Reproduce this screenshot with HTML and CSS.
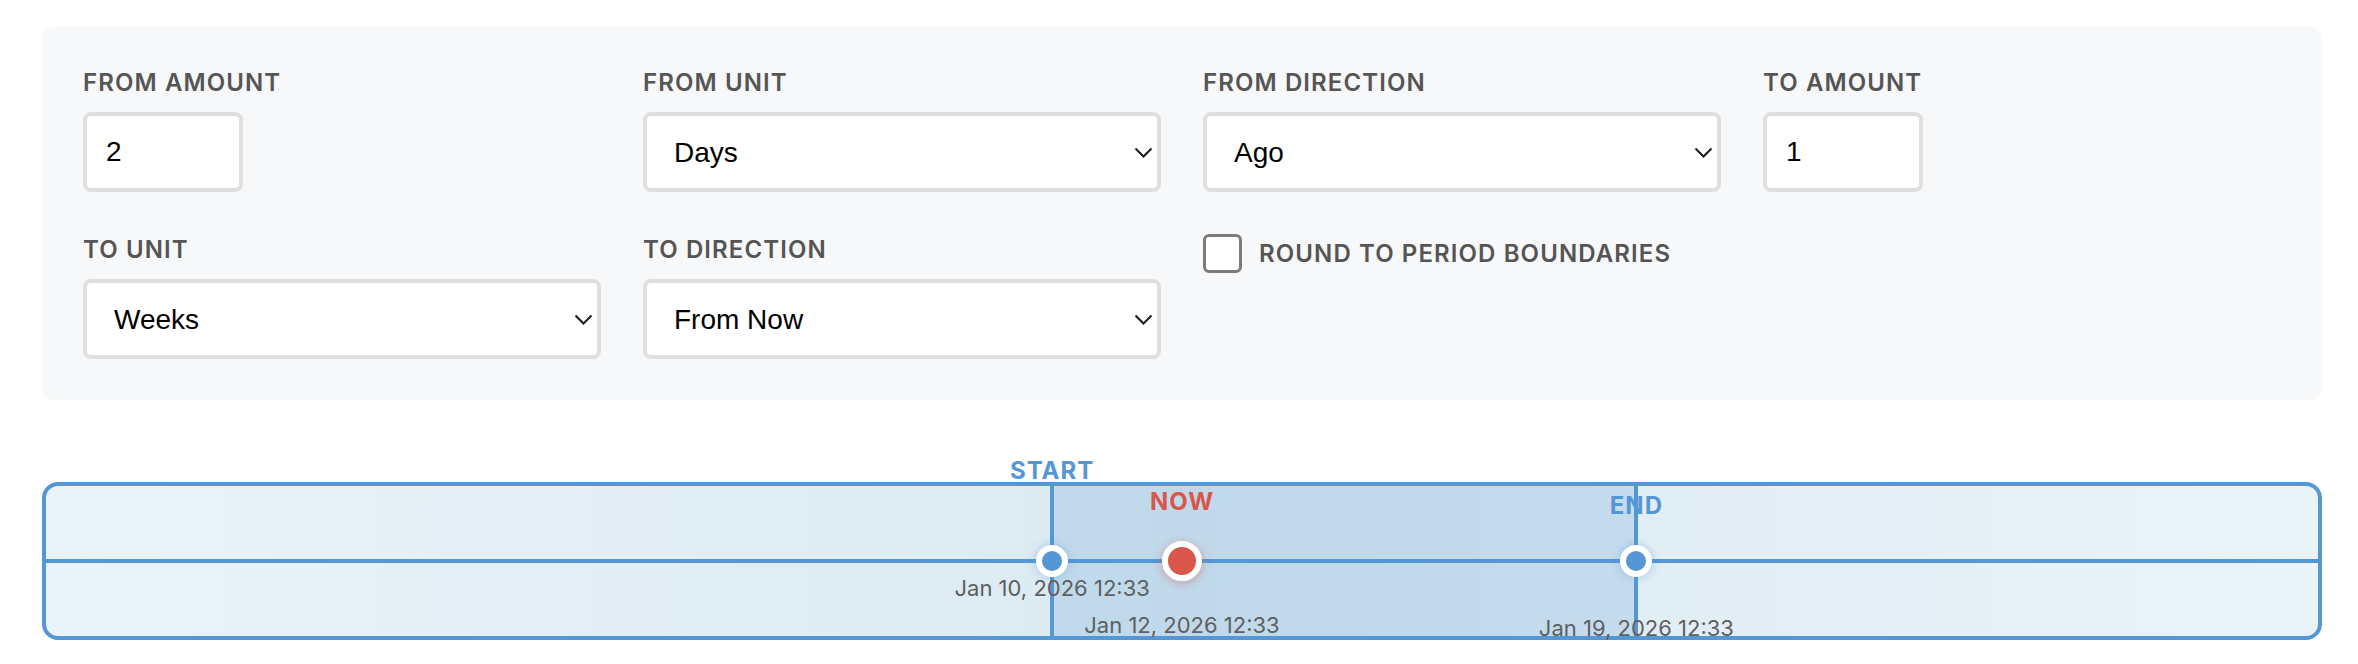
FILE: index.html
```html
<!DOCTYPE html>
<html>
<head>
    <title>Relative Range Picker</title>
    <link rel="stylesheet" href="styles.css">
</head>
<body>
    <div class="page">
        <div class="panel">
            <div class="field">
                <label for="fromAmount">From Amount</label>
                <input type="number" id="fromAmount" class="amount" value="2">
            </div>
            <div class="field">
                <label for="fromUnit">From Unit</label>
                <div class="select-wrap">
                    <select id="fromUnit">
                        <option>Days</option>
                        <option>Weeks</option>
                        <option>Months</option>
                    </select>
                    <svg class="chevron" width="19" height="11" viewBox="0 0 19 11"><polyline points="1.5,1.5 9.5,9.5 17.5,1.5"/></svg>
                </div>
            </div>
            <div class="field">
                <label for="fromDirection">From Direction</label>
                <div class="select-wrap">
                    <select id="fromDirection">
                        <option>Ago</option>
                        <option>From Now</option>
                    </select>
                    <svg class="chevron" width="19" height="11" viewBox="0 0 19 11"><polyline points="1.5,1.5 9.5,9.5 17.5,1.5"/></svg>
                </div>
            </div>
            <div class="field">
                <label for="toAmount">To Amount</label>
                <input type="number" id="toAmount" class="amount" value="1">
            </div>

            <div class="field">
                <label for="toUnit">To Unit</label>
                <div class="select-wrap">
                    <select id="toUnit">
                        <option>Weeks</option>
                        <option>Days</option>
                        <option>Months</option>
                    </select>
                    <svg class="chevron" width="19" height="11" viewBox="0 0 19 11"><polyline points="1.5,1.5 9.5,9.5 17.5,1.5"/></svg>
                </div>
            </div>
            <div class="field">
                <label for="toDirection">To Direction</label>
                <div class="select-wrap">
                    <select id="toDirection">
                        <option>From Now</option>
                        <option>Ago</option>
                    </select>
                    <svg class="chevron" width="19" height="11" viewBox="0 0 19 11"><polyline points="1.5,1.5 9.5,9.5 17.5,1.5"/></svg>
                </div>
            </div>
            <div class="field">
                <label class="check">
                    <input type="checkbox" id="round">
                    <span>Round to period boundaries</span>
                </label>
            </div>
        </div>

        <div class="timeline">
            <div class="range" style="left: 44.286%; width: 25.714%;"></div>
            <div class="axis"></div>

            <div class="marker start" style="left: 44.286%;">
                <div class="marker-line"></div>
                <div class="marker-dot"></div>
                <div class="marker-tag">Start</div>
                <div class="marker-date">Jan 10, 2026 12:33</div>
            </div>
            <div class="marker now" style="left: 50%;">
                <div class="marker-dot"></div>
                <div class="marker-tag">Now</div>
                <div class="marker-date">Jan 12, 2026 12:33</div>
            </div>
            <div class="marker end" style="left: 70%;">
                <div class="marker-line"></div>
                <div class="marker-dot"></div>
                <div class="marker-tag">End</div>
                <div class="marker-date">Jan 19, 2026 12:33</div>
            </div>
        </div>
    </div>
</body>
</html>
```

FILE: styles.css
```css
body { margin: 0; background: #fff; font-family: Inter, "Noto Sans", sans-serif; }
.page { padding: 27px 36px 20px 42px; }

/* form panel */
.panel { display: grid; grid-template-columns: repeat(4, 1fr); gap: 42px; padding: 40px 41px 41px; background: #f7f8fa; border-radius: 12px; }
.field { display: flex; flex-direction: column; align-items: flex-start; }
.field label { display: block; padding-top: 2px; margin-bottom: 15px; font-size: 24px; line-height: 28px; font-weight: 600; letter-spacing: 1.1px; text-transform: uppercase; color: #555; }
input.amount, select { box-sizing: border-box; height: 80px; border: 4px solid #dfdfdf; border-radius: 8px; background: #fff; color: #000; font-family: "Liberation Sans", Arial, sans-serif; font-size: 28px; outline: none; }
input.amount { width: 160px; padding: 0 0 0 19px; -moz-appearance: textfield; }
input.amount::-webkit-inner-spin-button, input.amount::-webkit-outer-spin-button { -webkit-appearance: none; margin: 0; }
.select-wrap { position: relative; width: 100%; }
select { width: 100%; padding: 0 50px 0 27px; -webkit-appearance: none; appearance: none; }
.chevron { position: absolute; right: 8px; top: 50%; margin-top: -5px; pointer-events: none; }
.chevron polyline { fill: none; stroke: #1a1a1a; stroke-width: 2; }

.field label.check { display: flex; align-items: center; gap: 17px; margin: 0; padding: 0; height: 39px; }
.check input { box-sizing: border-box; width: 39px; height: 39px; margin: 0; -webkit-appearance: none; appearance: none; border: 3px solid #7b7b7b; border-radius: 6px; background: #fff; }

/* timeline */
.timeline { position: relative; box-sizing: border-box; height: 158px; margin-top: 82px; border: 4px solid #5596d4; border-radius: 16px; background: linear-gradient(90deg, #eaf3f8 0%, #dbeaf2 50%, #eaf3f8 100%); }
.range { position: absolute; top: 0; bottom: 0; background: rgba(82, 150, 212, 0.2); }
.axis { position: absolute; left: 0; right: 0; top: 50%; height: 4px; margin-top: -2px; background: #5596d4; }
.marker { position: absolute; top: 0; bottom: 0; width: 0; }
.marker-line { position: absolute; top: 0; bottom: 0; left: -2px; width: 4px; background: #5596d4; }
.marker-dot { position: absolute; top: 50%; left: 0; box-sizing: border-box; width: 32px; height: 32px; transform: translate(-50%, -50%); border: 6px solid #fff; border-radius: 50%; background: #5596d4; box-shadow: 0 0 10px rgba(82, 150, 212, 0.45); }
.now .marker-dot { width: 40px; height: 40px; background: #d9574a; box-shadow: 0 2px 10px rgba(217, 87, 74, 0.45); }
.marker-tag { position: absolute; left: 0; transform: translateX(-50%); font-size: 24px; line-height: 24px; font-weight: 700; letter-spacing: 1px; text-transform: uppercase; color: #5596d4; white-space: nowrap; }
.now .marker-tag { color: #d9574a; }
.start .marker-tag { top: -27px; }
.now .marker-tag { top: 4px; }
.end .marker-tag { top: 8px; }
.marker-date { position: absolute; left: 0; transform: translateX(-50%); font-size: 22px; line-height: 22px; color: #5f5f5f; white-space: nowrap; }
.start .marker-date { top: 91px; }
.now .marker-date { top: 128px; }
.end .marker-date { top: 131px; }
```
